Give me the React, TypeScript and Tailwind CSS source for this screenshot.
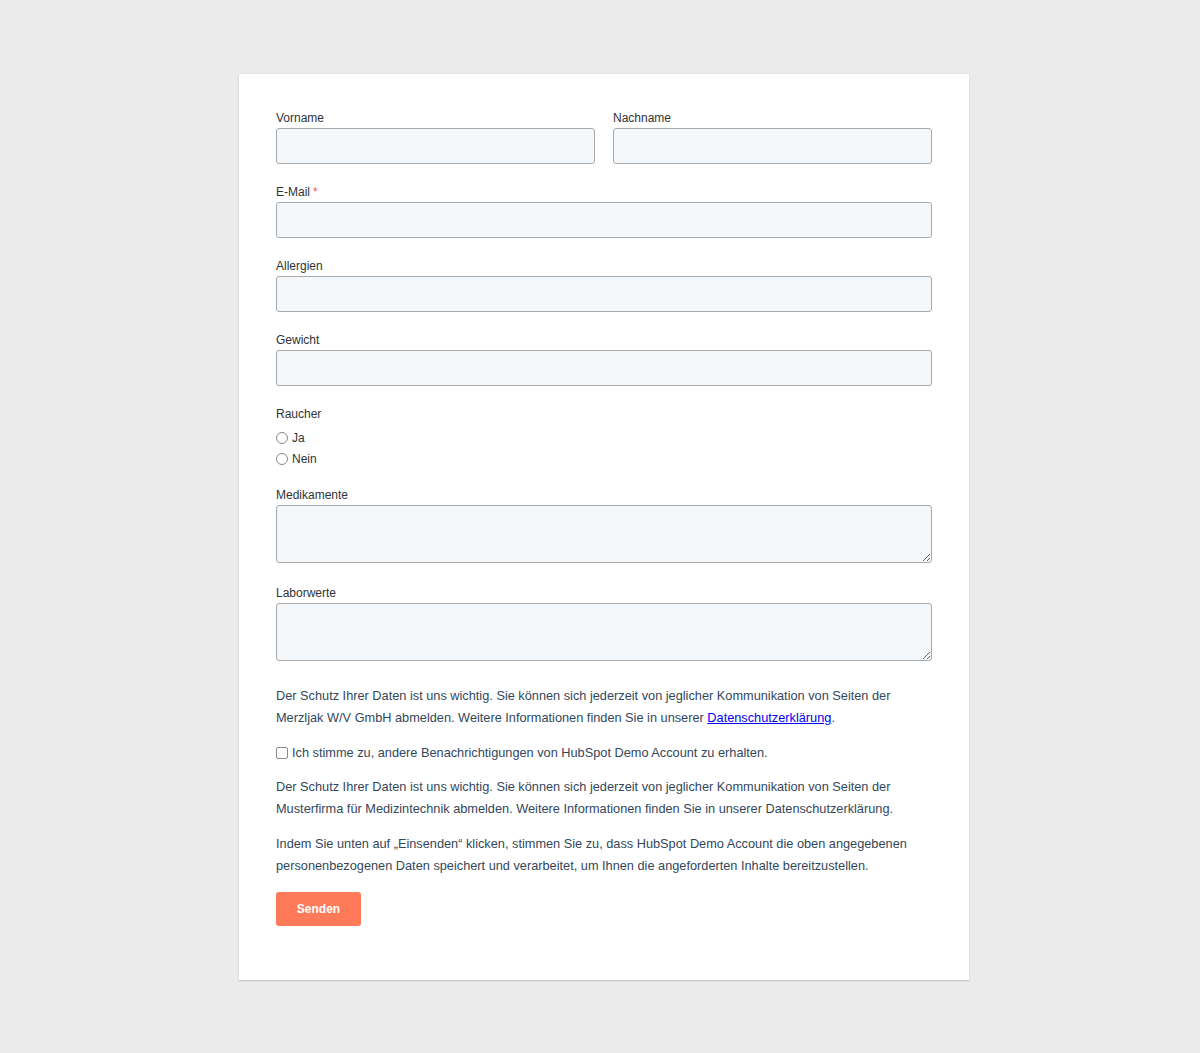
import React from 'react';

function Label({ children, required }: { children: React.ReactNode; required?: boolean }) {
  return (
    <label className="block h-[14px] mb-[3px] text-[12px] leading-[14px] text-[#2f3337]">
      {children}
      {required && <span className="text-[#f2545b] ml-[3px]">*</span>}
    </label>
  );
}

function TextField({ label, required, className = '' }: { label: string; required?: boolean; className?: string }) {
  return (
    <div className={className}>
      <Label required={required}>{label}</Label>
      <input
        type="text"
        className="block w-full h-[36px] px-[10px] bg-[#f5f8fa] border border-[#a7a9ab] rounded-[3px] text-[13px] text-[#33475b] outline-none"
      />
    </div>
  );
}

function TextArea({ label, className = '' }: { label: string; className?: string }) {
  return (
    <div className={className}>
      <Label>{label}</Label>
      <textarea className="block w-full h-[58px] px-[10px] py-[6px] bg-[#f5f8fa] border border-[#a7a9ab] rounded-[3px] text-[13px] text-[#33475b] outline-none resize-y" />
    </div>
  );
}

export default function App() {
  return (
    <div
      className="min-h-[1053px] bg-[#ebebeb] pt-[74px] pb-[73px]"
      style={{ fontFamily: '"Liberation Sans", Arial, Helvetica, sans-serif' }}
    >
      <div className="w-[730px] ml-[239px] bg-white px-[37px] pt-[37px] pb-[54px] shadow-[0_1px_1px_rgba(150,170,180,0.5),-1px_0_2px_rgba(0,0,0,0.04)]">
        {/* Name */}
        <div className="flex gap-[18px] mb-[21px]">
          <TextField label="Vorname" className="flex-1" />
          <TextField label="Nachname" className="flex-1" />
        </div>

        <TextField label="E-Mail" required className="mb-[21px]" />
        <TextField label="Allergien" className="mb-[21px]" />
        <TextField label="Gewicht" className="mb-[21px]" />

        {/* Raucher */}
        <div className="mb-[22px]">
          <Label>Raucher</Label>
          <div className="flex flex-col gap-[7px] pt-[7px]">
            {['Ja', 'Nein'].map((opt) => (
              <label key={opt} className="flex items-center h-[14px] text-[12px] leading-[14px] text-[#2f3337]">
                <span className="w-[12px] h-[12px] rounded-full border border-[#8a8a8a] bg-white mr-[4px]" />
                {opt}
              </label>
            ))}
          </div>
        </div>

        <TextArea label="Medikamente" className="mb-[23px]" />
        <TextArea label="Laborwerte" className="mb-[24px]" />

        <div className="text-[12.75px] leading-[22px] text-[#33475b]">
          <p>
            Der Schutz Ihrer Daten ist uns wichtig. Sie können sich jederzeit von jeglicher Kommunikation von Seiten der
            Merzljak W/V GmbH abmelden. Weitere Informationen finden Sie in unserer{' '}
            <a href="#" className="text-[#0000ee] underline">Datenschutzerklärung</a>.
          </p>

          <label className="flex items-center mt-[13px]">
            <span className="w-[12px] h-[12px] rounded-[2px] border border-[#8a8a8a] bg-white mr-[4px]" />
            Ich stimme zu, andere Benachrichtigungen von HubSpot Demo Account zu erhalten.
          </label>

          <p className="mt-[12px]">
            Der Schutz Ihrer Daten ist uns wichtig. Sie können sich jederzeit von jeglicher Kommunikation von Seiten der
            Musterfirma für Medizintechnik abmelden. Weitere Informationen finden Sie in unserer Datenschutzerklärung.
          </p>

          <p className="mt-[13px]">
            Indem Sie unten auf „Einsenden“ klicken, stimmen Sie zu, dass HubSpot Demo Account die oben angegebenen
            personenbezogenen Daten speichert und verarbeitet, um Ihnen die angeforderten Inhalte bereitzustellen.
          </p>
        </div>

        <button className="mt-[15px] w-[85px] h-[34px] bg-[#ff7a59] text-white text-[12px] font-bold rounded-[3px]">
          Senden
        </button>
      </div>
    </div>
  );
}
